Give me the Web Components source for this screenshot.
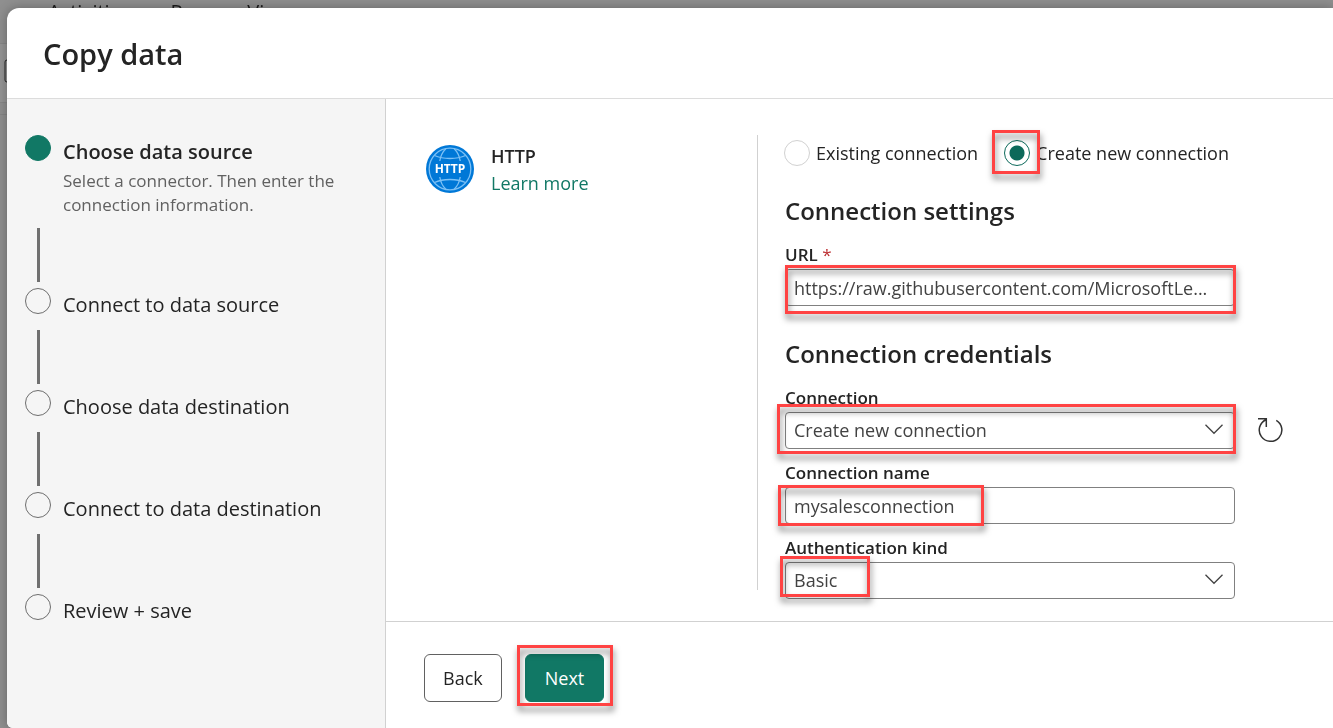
<!DOCTYPE html>
<html lang="en">
<head>
<meta charset="utf-8">
<meta name="viewport" content="width=device-width, initial-scale=1">
<title>Copy data</title>
<style>
  html, body { margin: 0; height: 100%; }
  body {
    font-family: "Open Sans", "Noto Sans", sans-serif;
    font-size: 18px;
    line-height: 24px;
    color: #242424;
    background: #8f8f8f;
    overflow: hidden;
    --brand: #117865;
    --line: #d1d1d1;
  }
</style>
</head>
<body>
<copy-data-app></copy-data-app>

<script>
const define = (name, html, init) => {
  const template = document.createElement('template');
  template.innerHTML = html;
  customElements.define(name, class extends HTMLElement {
    constructor() {
      super();
      this.attachShadow({ mode: 'open' }).append(template.content.cloneNode(true));
    }
    connectedCallback() { if (init) init(this, this.shadowRoot); }
  });
};

/* Red highlight frame laid over whatever is slotted */
define('high-light', `
  <style>
    :host { display: block; position: relative; }
    .frame {
      position: absolute; inset: var(--frame, -4px); pointer-events: none; z-index: 1;
      border: 3px solid #ff4343; filter: drop-shadow(1px 5px 3px rgba(0,0,0,.5));
    }
  </style>
  <slot></slot><div class="frame"></div>`);

/* Dimmed page that lies behind the dialog */
define('page-backdrop', `
  <style>
    :host { position: fixed; inset: 0; z-index: -1; color: #1b1b1b; font-size: 20px; }
    nav { display: flex; gap: 40px; padding-left: 48px; height: 43px; line-height: 24px; }
    .tools { height: 60px; background: #959595; border-block: 1px solid #878787; padding: 15px 0 0 4px; box-sizing: border-box; }
    .tools svg { display: block; }
    .canvas { margin-top: 11px; border-top: 1px solid #858585; }
  </style>
  <nav><span>Activities</span><span>Run</span><span>View</span></nav>
  <div class="tools"><svg width="22" height="24" fill="none" stroke="#222" stroke-width="1"><rect x="1" y="1" width="20" height="22" rx="2"/></svg></div>
  <div class="canvas"></div>`);

define('wizard-step', `
  <style>
    :host { display: block; }
    .row { display: flex; gap: 12px; align-items: flex-start; }
    .dot { flex: none; box-sizing: border-box; width: 26px; height: 26px; border: 1px solid #6e6e6e; border-radius: 50%; }
    .text { padding-top: 3px; }
    .title { font-size: 20px; line-height: 28px; }
    .note { font-size: 17px; line-height: 24px; margin-top: 3px; color: #616161; }
    .note:empty { display: none; }
    .rail { width: 3px; height: 54px; margin: 11px 0 6px 12px; background: #707070; }
    :host([active]) .dot { background: var(--brand); border-color: var(--brand); }
    :host([active]) .title { font-weight: 600; }
    :host([last]) .rail { display: none; }
  </style>
  <div class="row"><span class="dot"></span><div class="text"><div class="title"></div><div class="note"></div></div></div>
  <div class="rail"></div>`,
  (el, root) => {
    root.querySelector('.title').textContent = el.getAttribute('label');
    root.querySelector('.note').textContent = el.getAttribute('note') || '';
  });

define('wizard-steps', `
  <style>
    :host { display: block; box-sizing: border-box; background: #f5f5f5; border-right: 1px solid var(--line); padding: 36px 36px 36px 18px; }
  </style>
  <wizard-step active label="Choose data source" note="Select a connector. Then enter the connection information."></wizard-step>
  <wizard-step label="Connect to data source"></wizard-step>
  <wizard-step label="Choose data destination"></wizard-step>
  <wizard-step label="Connect to data destination"></wizard-step>
  <wizard-step last label="Review + save"></wizard-step>`);

define('connector-card', `
  <style>
    :host { display: flex; gap: 17px; align-items: flex-start; padding: 8px 0 0 40px; }
    svg { flex: none; margin-top: 2px; }
    .text { line-height: 27px; }
    .name { font-weight: 600; font-size: 18px; }
    a { color: var(--brand); text-decoration: none; font-size: 18px; }
  </style>
  <svg width="48" height="48" viewBox="0 0 48 48" role="img" aria-label="HTTP">
    <circle cx="24" cy="24" r="24" fill="#0078d7"/>
    <g fill="none" stroke="#7cc0f5" stroke-width="1.3">
      <circle cx="24" cy="24" r="20.8"/>
      <path d="M20 3.500C16.500 7 14.500 11 13.800 16M28 3.500C31.500 7 33.500 11 34.200 16M20 44.500C16.500 41 14.500 37 13.800 32M28 44.500C31.500 41 33.500 37 34.200 32"/>
      <path d="M8.500 10.500C17 14.500 31 14.500 39.500 10.500M8.500 37.500C17 33.500 31 33.500 39.500 37.500"/>
    </g>
    <text x="24" y="28" text-anchor="middle" fill="#fff" font-size="12" font-weight="700">HTTP</text>
  </svg>
  <div class="text"><div class="name">HTTP</div><a href="#learn">Learn more</a></div>`);

define('radio-option', `
  <style>
    :host { display: block; }
    label { display: flex; gap: 6px; align-items: center; font-size: 18px; line-height: 26px; white-space: nowrap; }
    input {
      appearance: none; flex: none; box-sizing: border-box; width: 26px; height: 26px; margin: 0;
      border: 1px solid var(--line); border-radius: 50%; background: #fff;
    }
    input:checked { border-color: #0c695a; background: radial-gradient(circle, #0c695a 7px, transparent 8px); }
    high-light { --frame: -10px -10px -8px -12px; }
  </style>
  <label></label>`,
  (el, root) => {
    const label = root.querySelector('label');
    const input = document.createElement('input');
    input.type = 'radio';
    input.name = 'mode';
    input.checked = el.hasAttribute('checked');
    if (input.checked) {
      const mark = document.createElement('high-light');
      input.style.display = 'block';
      mark.append(input);
      label.append(mark);
    } else label.append(input);
    const text = document.createElement('span');
    text.textContent = el.getAttribute('label');
    label.append(text);
  });

const fieldStyle = `
  <style>
    :host { display: block; width: 450px; max-width: 100%; }
    label { display: block; font-size: 17px; line-height: 24px; font-weight: 600; margin-bottom: 2px; }
    i { font-style: normal; color: #bc2f32; font-weight: 400; }
    .box { position: relative; }
    input, select {
      display: block; box-sizing: border-box; width: 100%; height: 37px; margin: 0; padding: 0 8px;
      font: inherit; font-size: 18px; color: #424242; background: #fff;
      border: 1px solid #808080; border-radius: 4px; appearance: none; outline: 0;
    }
    select { padding-bottom: 2px; }
    .chevron { position: absolute; right: 12px; top: 12px; pointer-events: none; }
    .frame {
      position: absolute; inset: var(--frame); pointer-events: none; z-index: 1;
      border: 3px solid #ff4343; filter: drop-shadow(1px 5px 3px rgba(0,0,0,.5));
    }
  </style>`;

define('text-field', `${fieldStyle}
  <label for="field"></label>
  <div class="box"><input id="field" type="text" spellcheck="false"><div class="frame"></div></div>`,
  (el, root) => {
    const label = root.querySelector('label');
    label.textContent = el.getAttribute('label');
    if (el.hasAttribute('required')) {
      const star = document.createElement('i');
      star.textContent = ' *';
      label.append(star);
    }
    root.querySelector('input').value = el.getAttribute('value');
  });

define('select-field', `${fieldStyle}
  <label for="field"></label>
  <div class="box">
    <select id="field"><option></option></select>
    <svg class="chevron" width="18" height="11" fill="none" stroke="#424242" stroke-width="1.3"><path d="M.5 .8L9 9.300L17.500 .8"/></svg>
    <div class="frame"></div>
  </div>`,
  (el, root) => {
    root.querySelector('label').textContent = el.getAttribute('label');
    root.querySelector('option').textContent = el.getAttribute('value');
  });

define('connection-form', `
  <style>
    :host { display: block; padding: 5px 27px 22px; }
    .modes { display: flex; gap: 26px; margin-left: -1px; }
    h2 { margin: 0 0 16px; font-size: 24px; line-height: 32px; font-weight: 600; }
    .modes + h2 { margin-top: 29px; }
    text-field + h2 { margin-top: 32px; }
    .fields { display: grid; gap: 12px; }
    .line { display: flex; gap: 22px; align-items: flex-end; }
    button { border: 0; background: none; padding: 0; margin-bottom: 6px; flex: none; }
    button svg { display: block; }
    .url { --frame: -4px -1px -8px 0; }
    .connection { --frame: -8px -1px -5px -8px; }
    .name { --frame: -2px 251px -2px -7px; }
    .auth { --frame: -6px 365px 2px -5px; }
  </style>
  <div class="modes">
    <radio-option label="Existing connection"></radio-option>
    <radio-option checked label="Create new connection"></radio-option>
  </div>
  <h2>Connection settings</h2>
  <text-field class="url" required label="URL" value="https://raw.githubusercontent.com/MicrosoftLe..."></text-field>
  <h2>Connection credentials</h2>
  <div class="fields">
    <div class="line">
      <select-field class="connection" label="Connection" value="Create new connection"></select-field>
      <button type="button" aria-label="Refresh"><svg width="26" height="26" fill="none" stroke="#333" stroke-width="1.500"><path d="M19.300 3.300A11.300 11.300 0 1 1 9 2.700M1 1.800H9.300V10"/></svg></button>
    </div>
    <text-field class="name" label="Connection name" value="mysalesconnection"></text-field>
    <select-field class="auth" label="Authentication kind" value="Basic"></select-field>
  </div>`);

define('wizard-footer', `
  <style>
    :host { display: flex; gap: 23px; padding: 32px 38px; border-top: 1px solid var(--line); }
    button {
      display: block; height: 48px; box-sizing: border-box; padding: 0 18px; border: 1px solid #616161; border-radius: 6px;
      background: #fff; color: #242424; font: inherit; font-size: 18px;
    }
    .primary { padding: 0 19px; background: var(--brand); border-color: var(--brand); color: #fff; font-weight: 500; }
    high-light { --frame: -9px -9px -4px -8px; }
  </style>
  <button type="button">Back</button>
  <high-light><button type="button" class="primary">Next</button></high-light>`);

define('copy-data-app', `
  <style>
    :host { display: block; height: 100%; box-sizing: border-box; padding: 8px 0 0 7px; }
    .dialog {
      height: 100%; display: grid; grid-template: auto 1fr / 379px 1fr; overflow: hidden;
      background: #fff; border-radius: 12px 0 0 6px; box-shadow: 0 0 12px rgba(0,0,0,.3);
    }
    h1 { grid-column: 1 / -1; margin: 0; padding: 26px 36px 24px; font-size: 29px; line-height: 40px; font-weight: 600; border-bottom: 1px solid #dcdcdc; }
    main { display: grid; grid-template-rows: 1fr auto; min-width: 0; }
    .body { display: grid; grid-template-columns: 371px 1px 1fr; padding-top: 36px; }
    .divider { background: var(--line); margin-bottom: 31px; }
  </style>
  <page-backdrop></page-backdrop>
  <div class="dialog" role="dialog" aria-label="Copy data">
    <h1>Copy data</h1>
    <wizard-steps></wizard-steps>
    <main>
      <div class="body">
        <connector-card></connector-card>
        <div class="divider"></div>
        <connection-form></connection-form>
      </div>
      <wizard-footer></wizard-footer>
    </main>
  </div>`);
</script>
</body>
</html>
